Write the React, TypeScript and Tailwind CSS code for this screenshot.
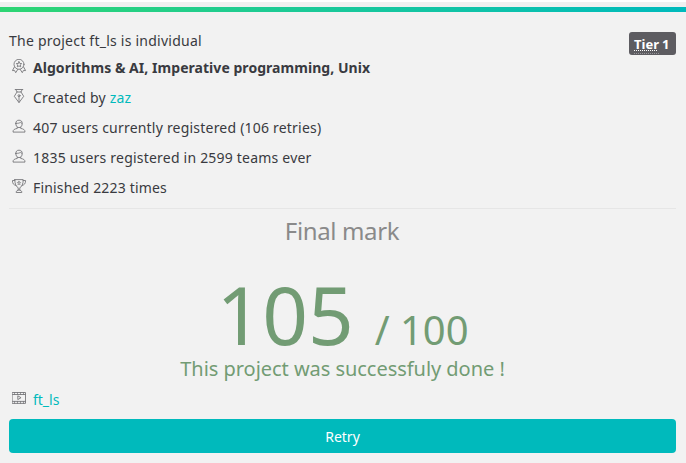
import type { ReactNode } from 'react';

function Icon({ children }: { children: ReactNode }) {
  return (
    <svg className="ml-[3px] h-4 w-4 shrink-0 -translate-y-px" viewBox="0 0 16 16" fill="none" stroke="#77777a" strokeWidth="0.9" strokeLinejoin="round" strokeLinecap="round">
      {children}
    </svg>
  );
}

const Badge = () => (
  <Icon>
    <circle cx="7" cy="5.3" r="5" />
    <path d="M2.4 8 .4 11.6l2.2-.1 1.1 2.2L5.8 10.4M11.6 8l2 3.6-2.2-.1-1.1 2.2-2.1-3.3" />
    <path d="m7 2.7.8 1.7 1.9.2-1.4 1.3.4 1.9L7 6.9l-1.7.9.4-1.9-1.4-1.3 1.9-.2Z" />
  </Icon>
);

const Pen = () => (
  <Icon>
    <path d="M3.2.5h7.6M3.9.7 5 3h4L10.1.7M5 3 2.3 7.3 7 13.6l4.7-6.3L9 3M7 13.2V7.5" />
    <circle cx="7" cy="6.7" r="1" />
  </Icon>
);

const User = () => (
  <Icon>
    <path d="M3.8 4.6C3.8 2.3 4.8 1.2 7 1.2S10.2 2.3 10.2 4.6 9 8.6 7 8.6 3.8 6.9 3.8 4.6ZM4 4.3c2.2.2 3.6-.2 4.3-1.1.3.6.8 1 1.7 1.1M5.3 8.1v1.3C2.5 10.1 1 10.4 1 13.1h12c0-2.7-1.5-3-4.3-3.7V8.1" />
  </Icon>
);

const Trophy = () => (
  <Icon>
    <path d="M2.8.6h8.4C11.2 4.9 10 7.8 7.8 8.7v2.4l2 1.4v1H4.2v-1l2-1.4V8.7C4 7.8 2.8 4.9 2.8.6ZM2.8 1.5H.4C.5 4.5 1.4 6 4 6.4M11.2 1.5h2.4c-.1 3-1 4.5-3.6 4.9M6.2 11.1h1.6" />
    <path d="m7 2.3.5 1.1 1.2.1-.9.9.3 1.2L7 5l-1.1.6.3-1.2-.9-.9 1.2-.1Z" strokeWidth="0.7" />
  </Icon>
);

const Film = () => (
  <Icon>
    <path d="M.5 1.5h13v10.9H.5ZM.5 3.5h13M.5 10.4h13M5.8 5.2v3.4l2.9-1.7Z" />
    <path d="M2.5 1.5v2M5.5 1.5v2M8.5 1.5v2M11.5 1.5v2M2.5 10.4v2M5.5 10.4v2M8.5 10.4v2M11.5 10.4v2" strokeWidth="0.7" />
  </Icon>
);

function Row({ icon, children }: { icon: ReactNode; children: ReactNode }) {
  return (
    <div className="flex h-[30px] items-center gap-[5px]">
      {icon}
      <span>{children}</span>
    </div>
  );
}

export default function App() {
  return (
    <main className="flex h-[463px] w-[686px] flex-col overflow-hidden bg-[#f2f2f2] font-['Noto_Sans',sans-serif] text-sm leading-5 tracking-[0.21px] text-[#393a40]">
      <div className="h-0.5 shrink-0 bg-white" />
      <div className="h-[5px] shrink-0 bg-[#f0f0f0]" />
      <div className="h-[5px] shrink-0 bg-linear-to-r from-[#2ed573] to-[#00babc]" />
      <section className="flex flex-col pl-[9px] pr-[10px] pt-[19px]">
        <header className="flex h-[22px] items-start justify-between">
          <p className="tracking-[0.24px]">The project ft_ls is individual</p>
          <span className="mt-px flex h-[23px] w-[47px] items-baseline gap-[3px] rounded-[3px] bg-[#5d5c61] pl-[5px] pt-1 text-[13px] leading-[17px] font-bold tracking-normal text-white">
            <abbr className="border-b border-dotted border-[#96959a] underline decoration-dotted decoration-1 underline-offset-1">Tier</abbr>1
          </span>
        </header>
        <Row icon={<Badge />}><strong className="font-bold tracking-[0.045px]">Algorithms &amp; AI, Imperative programming, Unix</strong></Row>
        <Row icon={<Pen />}>Created by <a className="text-[#00babc]">zaz</a></Row>
        <Row icon={<User />}>407 users currently registered (106 retries)</Row>
        <Row icon={<User />}>1835 users registered in 2599 teams ever</Row>
        <Row icon={<Trophy />}><span className="tracking-[0.17px]">Finished 2223 times</span></Row>
        <hr className="mt-[5px] border-[#e6e6e6]" />
        <div className="flex flex-col items-center">
          <h2 className="mt-[5px] mr-px text-2xl leading-[33px] tracking-[-0.36px] text-[#8a8a8a]">Final mark</h2>
          <div className="mt-[21px] flex h-[87px] items-baseline tracking-normal text-[#729c74]">
            <span className="text-[80px] leading-[92px]">105</span>
            <span className="ml-[21px] text-[40px] leading-[50px]">/ 100</span>
          </div>
          <p className="text-xl leading-[28px] tracking-[-0.04px] text-[#729c74]">This project was successfuly done !</p>
        </div>
        <div className="mt-0.5 tracking-normal">
          <Row icon={<Film />}><a className="text-[#00babc]">ft_ls</a></Row>
        </div>
        <button className="mt-1 h-[34px] rounded bg-[#00babc] pt-0.5 text-sm tracking-normal text-white">Retry</button>
      </section>
    </main>
  );
}
